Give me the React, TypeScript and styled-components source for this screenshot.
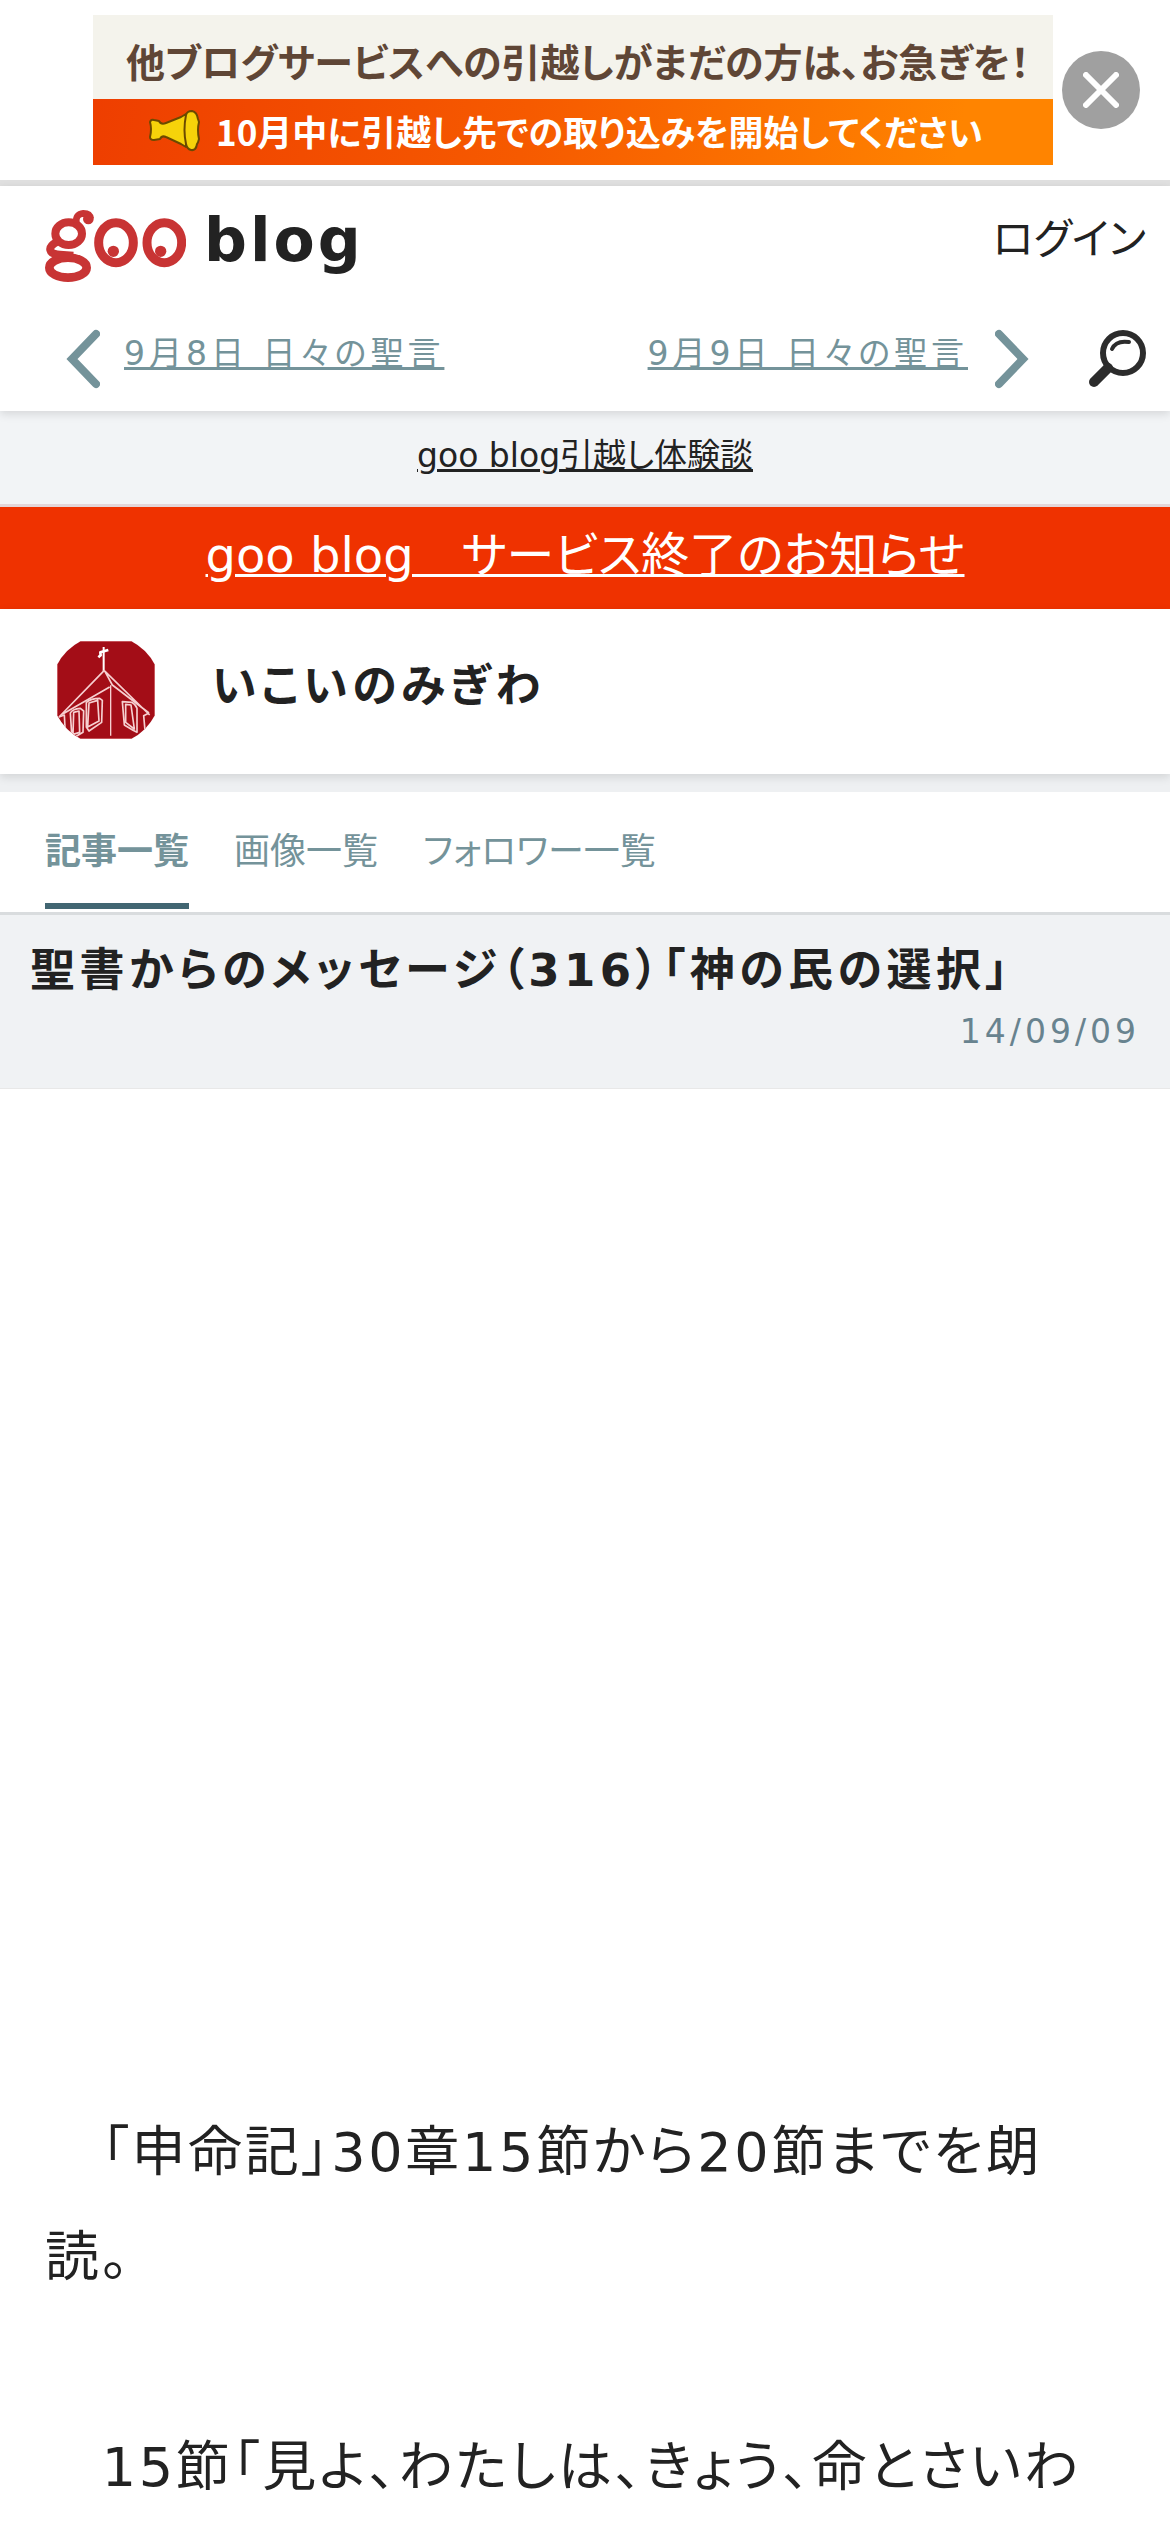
import React, { useState } from "react";
import styled, { createGlobalStyle } from "styled-components";

const ink = "#222";
const slate = "#74939a";

const GlobalStyle = createGlobalStyle`
  *, *::before, *::after { box-sizing: border-box; }
  html { background: #fff; }
  body {
    margin: 0;
    color: ${ink};
    background: #fff;
    font-family: "DejaVu Sans", "Noto Sans CJK JP", sans-serif;
    font-feature-settings: "palt";
    font-size: 33px;
    line-height: 48px;
  }
  h1, h2, p { margin: 0; }
  a { color: inherit; }
  svg { display: block; }
`;

/* Announcement banner */
const Announcement = styled.aside`
  display: flex;
  justify-content: flex-end;
  align-items: center;
  gap: 9px;
  padding: 15px 30px 15px 93px;
  border-bottom: 6px solid #e0e0e0;
`;

const BannerLink = styled.a`
  flex: 1;
  display: flex;
  flex-direction: column;
  height: 150px;
  font-family: "Noto Sans CJK JP", sans-serif;
  font-weight: 700;
  text-decoration: none;
  white-space: nowrap;
`;

const BannerTop = styled.span`
  display: flex;
  align-items: center;
  height: 84px;
  padding: 6px 0 0 33px;
  color: #5f4636;
  background: #f4f3ec;
  font-size: 39px;
  line-height: 60px;
`;

const BannerBottom = styled.span`
  display: flex;
  align-items: center;
  flex: 1;
  gap: 15px;
  padding: 0 0 3px 54px;
  color: #fff;
  background: linear-gradient(100deg, #ee3e00 0%, #f65a00 45%, #ff8400 90%);
  font-size: 35px;
  line-height: 60px;
`;

const CloseButton = styled.button`
  display: grid;
  place-items: center;
  width: 78px;
  height: 78px;
  padding: 0;
  border: 0;
  border-radius: 50%;
  background: #a0a0a0;
`;

/* Site header */
const Header = styled.header`
  position: relative;
  background: #fff;
  box-shadow: 0 3px 9px rgba(0, 0, 0, 0.12);
`;

const Brand = styled.div`
  display: flex;
  align-items: center;
  justify-content: space-between;
  height: 120px;
  padding: 0 24px 0 45px;
`;

const Logo = styled.a`
  display: flex;
  align-items: center;
  gap: 18px;
  color: ${ink};
  font-size: 60px;
  font-weight: 700;
  line-height: 72px;
  letter-spacing: 0.05em;
  text-decoration: none;
`;

const LogoText = styled.span`
  padding-bottom: 12px;
`;

const Login = styled.a`
  padding-bottom: 12px;
  font-size: 42px;
  line-height: 60px;
  text-decoration: none;
`;

const Pager = styled.nav`
  display: flex;
  align-items: center;
  height: 105px;
  padding: 0 24px 0 66px;
  color: ${slate};
  letter-spacing: 4px;
`;

const PagerItem = styled.div<{ $end?: boolean }>`
  display: flex;
  align-items: center;
  gap: ${(p) => (p.$end ? 27 : 24)}px;
  margin-left: ${(p) => (p.$end ? "auto" : "0")};
  a {
    padding-bottom: 9px;
    text-decoration-thickness: 3px;
    text-decoration-skip-ink: none;
  }
`;

const SearchButton = styled.button`
  margin-left: 60px;
  padding: 0;
  border: 0;
  background: none;
`;

/* Notices */
const StoryBar = styled.div`
  display: flex;
  justify-content: center;
  align-items: center;
  height: 96px;
  padding-bottom: 3px;
  background: #f2f4f6;
  border-bottom: 3px solid #e3d6d9;
  a { text-decoration-thickness: 3px; }
`;

const ClosingNotice = styled.div`
  display: flex;
  justify-content: center;
  align-items: center;
  height: 102px;
  padding-bottom: 6px;
  color: #fff;
  background: #ef3200;
  font-size: 48px;
  line-height: 72px;
  a { text-decoration-thickness: 3px; }
`;

/* Blog identity */
const BlogTitle = styled.div`
  position: relative;
  display: flex;
  align-items: center;
  gap: 57px;
  height: 165px;
  padding: 0 57px 3px;
  background: #fff;
  box-shadow: 0 3px 9px rgba(0, 0, 0, 0.12);
`;

const Heading = styled.h1`
  padding-bottom: 6px;
  font-size: 45px;
  line-height: 66px;
  letter-spacing: 0.1em;
`;

const Tabs = styled.nav`
  display: flex;
  gap: 45px;
  height: 141px;
  padding: 0 45px;
  border-top: 18px solid #eef0f2;
  border-bottom: 3px solid #d9dcde;
  color: ${slate};
`;

const Tab = styled.a<{ $active?: boolean }>`
  height: 117px;
  padding-top: 3px;
  border-bottom: 6px solid ${(p) => (p.$active ? "#426672" : "transparent")};
  font-size: 36px;
  font-weight: ${(p) => (p.$active ? 700 : 400)};
  line-height: 114px;
  text-decoration: none;
`;

/* Article */
const ArticleHead = styled.header`
  display: flex;
  flex-direction: column;
  height: 174px;
  padding: 21px 30px;
  background: #f0f2f4;
  border-bottom: 1px solid #e8e8e8;
`;

const ArticleTitle = styled.h2`
  font-size: 45px;
  line-height: 69px;
  letter-spacing: 0.1em;
`;

const PostDate = styled.time`
  align-self: flex-end;
  color: #68838f;
  font-size: 33px;
  line-height: 54px;
  letter-spacing: 4px;
`;

const AdSlot = styled.div`
  height: 1011px;
`;

const Body = styled.div`
  padding: 0 45px;
  font-size: 54px;
  line-height: 105px;
  letter-spacing: 0.05em;
`;

const Megaphone = () => (
  <svg width="54" height="42" viewBox="0 0 54 42" fill="#f6d30a" stroke="#6b4a00" strokeWidth="2" strokeLinejoin="round">
    <path d="M3 12 q1 -3 4 -2 l5 1 q2 4 7 2 L34 7 L39 4 V37 L34 34 L19 27 q-4 -2 -6 2 l-6 1 q-4 0 -4 -3 q2 -8 0 -15z" />
    <path d="M39 5 q1 -4 6 -4 q5 1 6 8 l1 3 q-2 8 0 17 q-1 4 -2 5 q-1 7 -6 6 q-4 -1 -5 -6 q-3 -14 0 -29z" />
  </svg>
);

const Cross = () => (
  <svg width="36" height="36" viewBox="0 0 36 36" stroke="#fff" strokeWidth="6" strokeLinecap="round">
    <path d="M3 3 33 33M33 3 3 33" />
  </svg>
);

const GooMark = () => (
  <svg width="141" height="72" viewBox="27 30 423 216" fill="none" stroke="#c83434">
    <ellipse cx="98" cy="101" rx="40" ry="34" strokeWidth="24" />
    <ellipse cx="96" cy="203" rx="56" ry="30" strokeWidth="26" />
    <path d="M62 126 Q40 138 43 150 Q46 163 72 164 L112 167" strokeWidth="24" />
    <path d="M121 68 Q118 42 142 40 Q162 40 164 56" strokeWidth="20" />
    <circle cx="157" cy="57" r="16" fill="#c83434" stroke="none" />
    <ellipse cx="240" cy="128" rx="52" ry="60" strokeWidth="27" />
    <ellipse cx="385" cy="128" rx="52" ry="60" strokeWidth="27" />
    <circle cx="232" cy="154" r="17" fill="#c83434" stroke="none" />
    <circle cx="374" cy="154" r="17" fill="#c83434" stroke="none" />
  </svg>
);

const Chevron = ({ right }: { right?: boolean }) => (
  <svg width="34" height="66" viewBox="0 0 34 66" fill="none" stroke={slate} strokeWidth="8" strokeLinecap="round">
    <path d={right ? "M4 8 28 33 4 58" : "M30 8 6 33 30 58"} />
  </svg>
);

const SearchIcon = () => (
  <svg width="57" height="57" viewBox="0 0 57 57" fill="none" stroke="#2c2c2c" strokeLinecap="round">
    <circle cx="34" cy="23" r="20" strokeWidth="6" />
    <path d="M23 19 Q27 10 40 12" strokeWidth="4" />
    <path d="M19 38 5 52" strokeWidth="10" />
  </svg>
);

const Church = () => (
  <svg width="98" height="98" viewBox="22 22 294 294" role="img" aria-label="教会">
    <defs>
      <clipPath id="badge"><circle cx="169" cy="169" r="165" /></clipPath>
    </defs>
    <g clipPath="url(#badge)" fill="none" stroke="#f6cfd0" strokeWidth="5" strokeLinejoin="round">
      <rect x="22" y="22" width="294" height="294" fill="#a30d17" stroke="#cf6a70" />
      <path d="M162 40 V114" stroke="#fff" strokeWidth="6" />
      <path d="M146 71 L153 65 L152 56 L176 49" stroke="#fff" strokeWidth="8" />
      <path d="M164 110 28 250 M38 242 180 160 M164 110 188 154 298 238 M167 114 300 244" />
      <path d="M183 155 V306" strokeWidth="4" />
      <path d="M28 250 44 244 46 280 52 300 M298 238 282 246 286 290" />
      <path d="M62 238 Q68 226 92 224 L102 232 100 296 76 310 66 300z M72 236 88 232 90 296 70 302z" />
      <path d="M110 206 Q124 194 150 194 L158 200 156 266 118 292 110 280z M118 208 144 200 148 262 114 280z" />
      <path d="M218 204 246 206 Q258 212 262 224 L262 296 250 290 224 274z M228 212 244 214 254 286 228 266z" />
    </g>
  </svg>
);

export default function App() {
  const [bannerOpen, setBannerOpen] = useState(true);
  return (
    <>
      <GlobalStyle />
      {bannerOpen && (
        <Announcement>
          <BannerLink href="#move">
            <BannerTop>他ブログサービスへの引越しがまだの方は、お急ぎを！</BannerTop>
            <BannerBottom>
              <Megaphone />
              10月中に引越し先での取り込みを開始してください
            </BannerBottom>
          </BannerLink>
          <CloseButton type="button" aria-label="閉じる" onClick={() => setBannerOpen(false)}>
            <Cross />
          </CloseButton>
        </Announcement>
      )}
      <Header>
        <Brand>
          <Logo href="#top" aria-label="goo blog">
            <GooMark />
            <LogoText>blog</LogoText>
          </Logo>
          <Login href="#login">ログイン</Login>
        </Brand>
        <Pager aria-label="前後の記事">
          <PagerItem>
            <Chevron />
            <a href="#prev">9月8日 日々の聖言</a>
          </PagerItem>
          <PagerItem $end>
            <a href="#next">9月9日 日々の聖言</a>
            <Chevron right />
          </PagerItem>
          <SearchButton type="button" aria-label="検索">
            <SearchIcon />
          </SearchButton>
        </Pager>
      </Header>
      <StoryBar>
        <a href="#stories">goo blog引越し体験談</a>
      </StoryBar>
      <ClosingNotice>
        <a href="#closing">goo blog　サービス終了のお知らせ</a>
      </ClosingNotice>
      <BlogTitle>
        <Church />
        <Heading>いこいのみぎわ</Heading>
      </BlogTitle>
      <Tabs aria-label="ブログ">
        <Tab href="#entries" $active>記事一覧</Tab>
        <Tab href="#images">画像一覧</Tab>
        <Tab href="#followers">フォロワー一覧</Tab>
      </Tabs>
      <article>
        <ArticleHead>
          <ArticleTitle>聖書からのメッセージ（316）「神の民の選択」</ArticleTitle>
          <PostDate dateTime="2014-09-09">14/09/09</PostDate>
        </ArticleHead>
        <AdSlot />
        <Body>
          <p>　「申命記」30章15節から20節までを朗読。</p>
          <br />
          <p>　15節「見よ、わたしは、きょう、命とさいわ</p>
        </Body>
      </article>
    </>
  );
}
